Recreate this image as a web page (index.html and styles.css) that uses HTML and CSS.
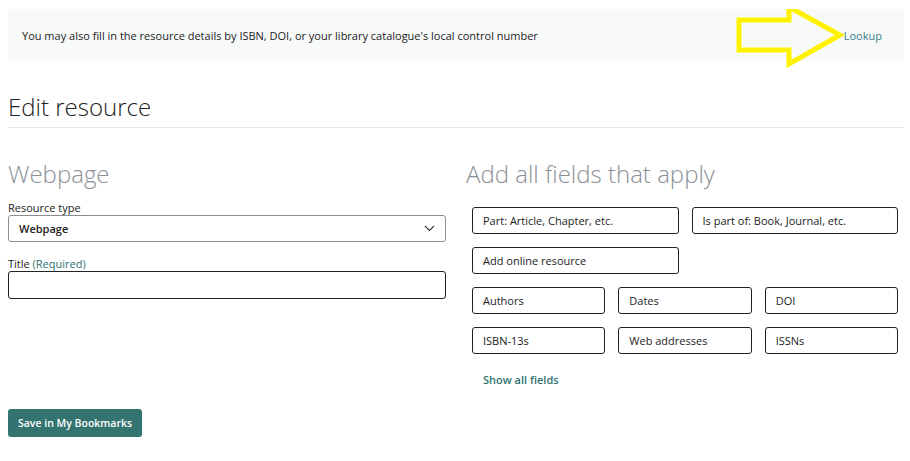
FILE: index.html
```html
<!DOCTYPE html>
<html lang="en">
<head>
  <meta charset="UTF-8">
  <title>Edit resource</title>
  <link rel="stylesheet" href="styles.css">
</head>
<body>

  <div class="lookup-bar">
    <p>You may also fill in the resource details by ISBN, DOI, or your library catalogue's local control number</p>
    <a href="#" class="link">Lookup</a>
    <!-- highlight arrow -->
    <svg class="arrow" width="110" height="66" viewBox="0 0 110 66">
      <polygon points="3,17 53,17 53,4 104,32 53,61 53,47 3,47" fill="none" stroke="#fff200" stroke-width="5" stroke-linejoin="miter"/>
    </svg>
  </div>

  <h1>Edit resource</h1>

  <form class="editor">
    <div class="col">
      <h2>Webpage</h2>
      <div class="field">
        <label for="type">Resource type</label>
        <div class="select">
          <span>Webpage</span>
          <svg width="11" height="7" viewBox="0 0 11 7"><path d="M1 1 L5.5 5.5 L10 1" fill="none" stroke="#333" stroke-width="1.1"/></svg>
        </div>
      </div>
      <div class="field">
        <label for="title">Title <span class="req">(Required)</span></label>
        <input type="text" id="title">
      </div>
    </div>

    <div class="col">
      <h2>Add all fields that apply</h2>
      <div class="grid two first">
        <button type="button">Part: Article, Chapter, etc.</button>
        <button type="button">Is part of: Book, Journal, etc.</button>
        <button type="button">Add online resource</button>
      </div>
      <div class="grid three">
        <button type="button">Authors</button>
        <button type="button">Dates</button>
        <button type="button">DOI</button>
        <button type="button">ISBN-13s</button>
        <button type="button">Web addresses</button>
        <button type="button">ISSNs</button>
      </div>
      <a href="#" class="link show-all">Show all fields</a>
    </div>
  </form>

  <button type="button" class="save">Save in My Bookmarks</button>

</body>
</html>
```

FILE: styles.css
```css
body {
  font-family: 'Open Sans', sans-serif;
  font-size: 11px;
  color: #222;
  background: #fff;
  margin: 9px 6px 0 8px;
}

.lookup-bar {
  position: relative;
  display: flex;
  align-items: center;
  justify-content: space-between;
  height: 52px;
  padding: 0 22px 0 14px;
  background-color: #f8fafa;
}

.lookup-bar p {
  margin: 0;
}

.link {
  color: #2f7271;
  text-decoration: none;
}

.lookup-bar .link {
  color: #3b7f8a;
}

.arrow {
  position: absolute;
  left: 728px;
  top: -6px;
}

h1 {
  font-weight: 300;
  font-size: 24px;
  margin: 29px -6px 0 0;
  padding-bottom: 4px;
  border-bottom: 1px solid #e6e6e6;
}

.editor {
  display: grid;
  grid-template-columns: 1fr 1fr;
  column-gap: 20px;
}

h2 {
  font-weight: 300;
  font-size: 24px;
  color: #8b9097;
  margin: 29px 0 10px;
}

.field {
  margin-bottom: 14px;
}

.field label {
  display: block;
}

.req {
  color: #2f7271;
}

.select {
  display: flex;
  justify-content: space-between;
  align-items: center;
  height: 27px;
  box-sizing: border-box;
  padding: 0 10px;
  border: 1px solid #8a8d91;
  border-radius: 3px;
  font-weight: 600;
}

input[type="text"] {
  display: block;
  width: 100%;
  height: 28px;
  box-sizing: border-box;
  border: 1.5px solid #222;
  border-radius: 3px;
  font: inherit;
}

.grid {
  display: grid;
  gap: 13px;
  padding: 0 6px;
  margin-bottom: 13px;
}

.grid.first {
  margin-top: 17px;
}

.two {
  grid-template-columns: 1fr 1fr;
}

.three {
  grid-template-columns: 1fr 1fr 1fr;
}

.grid button {
  height: 27px;
  padding: 0 10px;
  text-align: left;
  font-family: inherit;
  font-size: 11px;
  color: #222;
  background: #fff;
  border: 1px solid #222;
  border-radius: 3px;
}

.show-all {
  display: inline-block;
  margin: 5px 0 0 17px;
  font-weight: 600;
}

.save {
  display: block;
  margin-top: 22px;
  height: 28px;
  padding: 0 10px;
  background-color: #337470;
  color: #fff;
  border: none;
  border-radius: 3px;
  font-family: inherit;
  font-size: 10.5px;
  font-weight: 600;
}
```
